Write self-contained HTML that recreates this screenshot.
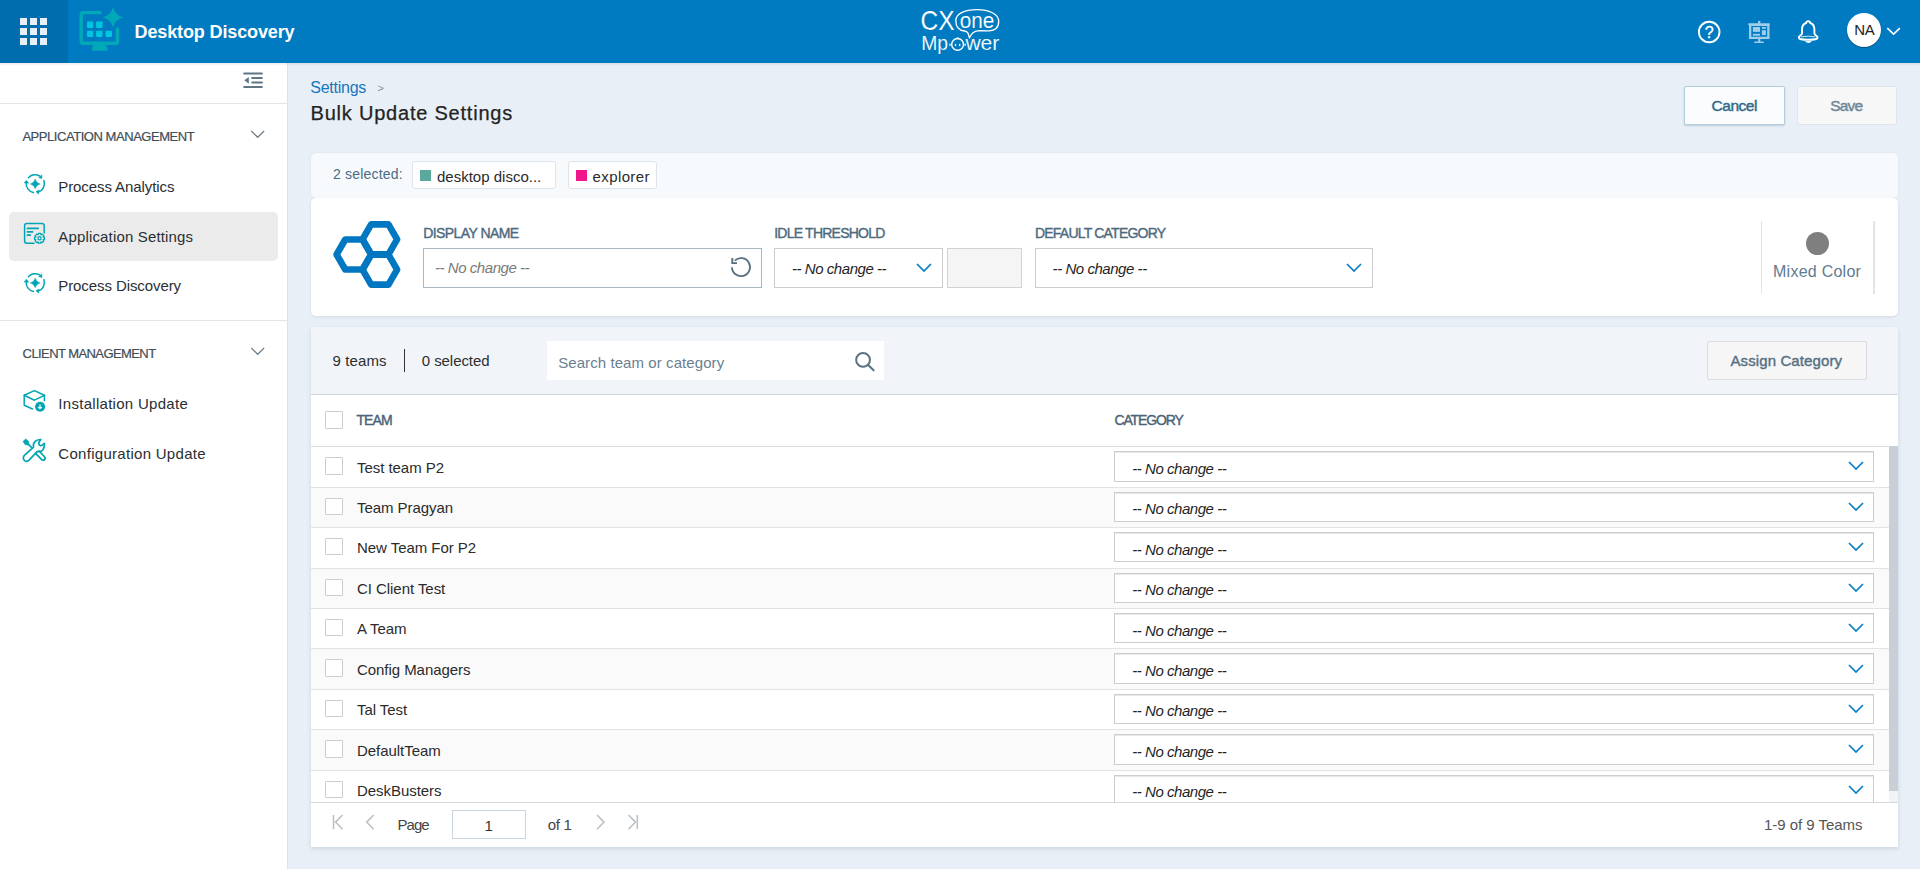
<!DOCTYPE html>
<html><head><meta charset="utf-8"><title>Bulk Update Settings</title>
<style>
html,body{margin:0;padding:0;width:1920px;height:869px;overflow:hidden;background:#e9eff6;font-family:"Liberation Sans", sans-serif;}
.t{position:absolute;line-height:1;white-space:nowrap;}
.r{position:absolute;box-sizing:border-box;}
svg{position:absolute;overflow:visible;}
</style></head><body>
<div class="r" style="left:0px;top:0px;width:1920px;height:63px;background:#007bc1;"></div>
<div class="r" style="left:0px;top:0px;width:68px;height:63px;background:#006dae;"></div>
<div class="r" style="left:20px;top:18px;width:7px;height:7px;background:#e8f0f7;"></div>
<div class="r" style="left:20px;top:28px;width:7px;height:7px;background:#e8f0f7;"></div>
<div class="r" style="left:20px;top:38px;width:7px;height:7px;background:#e8f0f7;"></div>
<div class="r" style="left:30px;top:18px;width:7px;height:7px;background:#e8f0f7;"></div>
<div class="r" style="left:30px;top:28px;width:7px;height:7px;background:#e8f0f7;"></div>
<div class="r" style="left:30px;top:38px;width:7px;height:7px;background:#e8f0f7;"></div>
<div class="r" style="left:40px;top:18px;width:7px;height:7px;background:#e8f0f7;"></div>
<div class="r" style="left:40px;top:28px;width:7px;height:7px;background:#e8f0f7;"></div>
<div class="r" style="left:40px;top:38px;width:7px;height:7px;background:#e8f0f7;"></div>
<svg style="left:70px;top:0" width="70" height="63" viewBox="0 0 70 63">
<path d="M30.2 12.6 H13.4 Q11.2 12.6 11.2 14.8 V41.1 Q11.2 43.3 13.4 43.3 H45.3 Q47.5 43.3 47.5 41.1 V29" fill="none" stroke="#00a8b8" stroke-width="3.4" stroke-linecap="round"/>
<path d="M23.4 44.6 H36 L37.6 49.3 Q37.9 50.7 36.5 50.7 H22.9 Q21.5 50.7 21.8 49.3 Z" fill="#00a8b8"/>
<path d="M43 6.9 Q45 15.2 53.3 17.2 Q45 19.2 43 27.5 Q41 19.2 32.7 17.2 Q41 15.2 43 6.9 Z" fill="#00a8b8"/>
<g fill="#00c6de">
<rect x="17" y="21.4" width="6.2" height="6.5" rx="1"/>
<rect x="26.1" y="21.4" width="6.4" height="6.5" rx="1"/>
<rect x="17" y="30.8" width="6.2" height="6.3" rx="1"/>
<rect x="26.1" y="30.8" width="6.4" height="6.3" rx="1"/>
<rect x="35.6" y="30.8" width="6.4" height="6.3" rx="1"/>
</g></svg>
<div class="t" style="left:134.60px;top:23.40px;font-size:18px;color:#ffffff;font-weight:bold;font-style:normal;letter-spacing:-0.13px;">Desktop Discovery</div>
<svg style="left:880px;top:0" width="160" height="63" viewBox="0 0 160 63">
<g fill="#fff" stroke="#007bc1" stroke-width="0.15" font-family="Liberation Sans">
<text x="40.6" y="30" font-size="27.4" textLength="34" lengthAdjust="spacingAndGlyphs">CX</text>
<text x="79.8" y="28" font-size="22.5" textLength="34.6" lengthAdjust="spacingAndGlyphs">one</text>
<text x="41.2" y="49.8" font-size="20.4" textLength="26.8" lengthAdjust="spacingAndGlyphs">Mp</text>
<text x="85.4" y="49.8" font-size="20" textLength="34" lengthAdjust="spacingAndGlyphs">wer</text>
</g>
<path d="M89.4 38 C88.6 34 88 31.4 84.5 31 C78.5 30.4 75.8 25.8 75.8 20.5 C75.8 13.2 85.5 9.7 97 9.7 C109 9.7 118.7 14 118.7 21.3 C118.7 27.8 114.5 30.8 108.5 30.8 L99.5 30.6 C94 30.6 91 33.8 89.4 38 Z" fill="none" stroke="#fff" stroke-width="1.3" stroke-linejoin="round"/>
<circle cx="77.6" cy="44.4" r="5.9" fill="none" stroke="#fff" stroke-width="1.4"/>
<circle cx="77.7" cy="38.3" r="1" fill="#fff"/>
<ellipse cx="75.5" cy="45" rx="0.75" ry="1.25" fill="#fff"/>
<ellipse cx="79.7" cy="45" rx="0.75" ry="1.25" fill="#fff"/>
<rect x="69.3" y="43.4" width="1.4" height="2.4" rx="0.6" fill="#fff"/>
<rect x="84.4" y="43.4" width="1.4" height="2.4" rx="0.6" fill="#fff"/>
</svg>
<svg style="left:1690px;top:10px" width="140" height="45" viewBox="0 0 140 45">
<circle cx="19.2" cy="22" r="10.3" fill="none" stroke="#fff" stroke-width="1.9"/>
<text x="19.2" y="27.8" text-anchor="middle" font-family="Liberation Sans" font-size="16" fill="#fff" stroke="#fff" stroke-width="0.3">?</text>
<g fill="#a0cde9" stroke="none">
<rect x="58.1" y="13.15" width="21.9" height="2.1" rx="0.9"/>
<rect x="68.1" y="10.9" width="2.2" height="3"/>
<path d="M59 15 H79.5 V28.9 H59 Z M61.3 15.9 V26.85 H77.2 V15.9 Z" fill-rule="evenodd"/>
<rect x="62.9" y="17" width="7.1" height="4.85"/>
<rect x="71.9" y="17" width="4" height="1.8"/>
<rect x="71.9" y="20.25" width="4" height="4.85"/>
<rect x="62.9" y="23.8" width="7.1" height="1.9"/>
<rect x="68.2" y="28.9" width="2.1" height="3"/>
<rect x="64" y="31.4" width="10" height="1.6" rx="0.8"/>
</g>
<path d="M118.2 11.2 C116.8 11.2 116.2 12.2 116.1 13 C113.3 13.8 112 16.5 112 19.8 V23.6 C112 24.6 111 25.2 110 25.8 C108.2 26.8 108.4 28.8 111 29.3 C113 29.7 115.5 29.8 118.2 29.8 C120.9 29.8 123.4 29.7 125.4 29.3 C128 28.8 128.2 26.8 126.4 25.8 C125.4 25.2 124.4 24.6 124.4 23.6 V19.8 C124.4 16.5 123.1 13.8 120.3 13 C120.2 12.2 119.6 11.2 118.2 11.2 Z" fill="none" stroke="#fff" stroke-width="1.9"/>
<path d="M111 26.9 Q118.2 25.4 125.4 26.9" fill="none" stroke="#fff" stroke-width="1" opacity="0.8"/>
<path d="M114.9 30.9 Q118.4 35 122 30.9 Z" fill="#fff"/>
</svg>
<div class="r" style="left:1847px;top:13px;width:34px;height:34px;border-radius:50%;background:#fff;box-shadow:0 1px 1px rgba(0,0,0,0.35);"></div>
<div class="t" style="left:1854.30px;top:22.25px;font-size:15px;color:#222;font-weight:normal;font-style:normal;letter-spacing:-0.4px;">NA</div>
<svg style="left:1880px;top:20px" width="30" height="20" viewBox="0 0 30 20">
<path d="M7.3 8.2 L13.6 14.2 L19.9 8.2" fill="none" stroke="#fff" stroke-width="1.6"/>
</svg>
<div class="r" style="left:0px;top:63px;width:287px;height:806px;background:#fff;"></div>
<div class="r" style="left:287px;top:63px;width:1px;height:806px;background:#e2e1e2;"></div>
<div class="r" style="left:0px;top:103px;width:287px;height:1px;background:#e1e5e8;"></div>
<div class="r" style="left:0px;top:320px;width:287px;height:1px;background:#e1e5e8;"></div>
<div class="r" style="left:0px;top:63px;width:1920px;height:3px;background:linear-gradient(rgba(60,40,40,0.09),rgba(60,40,40,0));"></div>
<svg style="left:236px;top:66px" width="34" height="30" viewBox="0 0 34 30">
<g stroke="#5e7686" stroke-width="2" stroke-linecap="round">
<line x1="8.2" y1="7.4" x2="25.9" y2="7.4"/>
<line x1="16.2" y1="12.1" x2="25.9" y2="12.1"/>
<line x1="16.2" y1="16.6" x2="25.9" y2="16.6"/>
<line x1="8.2" y1="20.9" x2="25.9" y2="20.9"/>
</g>
<path d="M8.3 14.3 L12.8 10.9 V17.7 Z" fill="#5e7686"/>
</svg>
<div class="t" style="left:22.40px;top:130.05px;font-size:13px;color:#414d55;font-weight:normal;font-style:normal;letter-spacing:-0.45px;-webkit-text-stroke:0.2px #414d55;">APPLICATION MANAGEMENT</div>
<svg style="left:248px;top:126px" width="20" height="16" viewBox="0 0 20 16">
<path d="M3.2 4.9 L9.7 11.3 L16.2 4.9" fill="none" stroke="#6a7b88" stroke-width="1.3"/>
</svg>
<div class="t" style="left:22.60px;top:347.45px;font-size:13px;color:#414d55;font-weight:normal;font-style:normal;letter-spacing:-0.58px;-webkit-text-stroke:0.2px #414d55;">CLIENT MANAGEMENT</div>
<svg style="left:248px;top:343px" width="20" height="16" viewBox="0 0 20 16">
<path d="M3.2 4.9 L9.7 11.3 L16.2 4.9" fill="none" stroke="#6a7b88" stroke-width="1.3"/>
</svg>
<div class="r" style="left:9px;top:212px;width:269px;height:49px;background:#ebebeb;border-radius:5px;"></div>
<div class="t" style="left:58.30px;top:179.35px;font-size:15px;color:#2a2f33;font-weight:normal;font-style:normal;letter-spacing:-0.09px;">Process Analytics</div>
<div class="t" style="left:58.30px;top:229.35px;font-size:15px;color:#2a2f33;font-weight:normal;font-style:normal;letter-spacing:0.16px;">Application Settings</div>
<div class="t" style="left:58.30px;top:278.15px;font-size:15px;color:#2a2f33;font-weight:normal;font-style:normal;letter-spacing:-0.09px;">Process Discovery</div>
<div class="t" style="left:58.30px;top:396.05px;font-size:15px;color:#2a2f33;font-weight:normal;font-style:normal;letter-spacing:0.29px;">Installation Update</div>
<div class="t" style="left:58.30px;top:445.95px;font-size:15px;color:#2a2f33;font-weight:normal;font-style:normal;letter-spacing:0.29px;">Configuration Update</div>
<svg style="left:20px;top:170px" width="30" height="30" viewBox="0 0 30 30">
<g fill="none" stroke="#00a5b5" stroke-width="1.5" stroke-linecap="round">
<path d="M8.4 7.7 A9 9 0 0 1 19.6 5.9"/>
<path d="M23.9 10.6 A9 9 0 0 1 18.2 22.1"/>
<path d="M13.4 22.5 A9 9 0 0 1 6.3 12.4"/>
</g>
<g fill="#00a5b5" stroke="#00a5b5" stroke-width="0.5" stroke-linejoin="round">
<path d="M21.8 5.0 L22.0 8.6 L18.6 7.6 Z"/>
<path d="M19.2 20.0 L15.9 21.6 L18.5 24.2 Z"/>
<path d="M6.5 10.2 L4.0 12.9 L8.6 13.2 Z"/>
<path d="M15.2 9.0 Q16.2 12.9 20.1 13.9 Q16.2 14.9 15.2 18.8 Q14.2 14.9 10.3 13.9 Q14.2 12.9 15.2 9.0 Z"/>
</g></svg>
<svg style="left:20px;top:269px" width="30" height="30" viewBox="0 0 30 30">
<g fill="none" stroke="#00a5b5" stroke-width="1.5" stroke-linecap="round">
<path d="M8.4 7.7 A9 9 0 0 1 19.6 5.9"/>
<path d="M23.9 10.6 A9 9 0 0 1 18.2 22.1"/>
<path d="M13.4 22.5 A9 9 0 0 1 6.3 12.4"/>
</g>
<g fill="#00a5b5" stroke="#00a5b5" stroke-width="0.5" stroke-linejoin="round">
<path d="M21.8 5.0 L22.0 8.6 L18.6 7.6 Z"/>
<path d="M19.2 20.0 L15.9 21.6 L18.5 24.2 Z"/>
<path d="M6.5 10.2 L4.0 12.9 L8.6 13.2 Z"/>
<path d="M15.2 9.0 Q16.2 12.9 20.1 13.9 Q16.2 14.9 15.2 18.8 Q14.2 14.9 10.3 13.9 Q14.2 12.9 15.2 9.0 Z"/>
</g></svg>
<svg style="left:20px;top:218px" width="30" height="30" viewBox="0 0 30 30">
<g fill="none" stroke="#00a5b5" stroke-width="1.5" stroke-linecap="round">
<path d="M14 25.2 H6.8 Q4.6 25.2 4.6 23 V7.7 Q4.6 5.5 6.8 5.5 H22 Q24.2 5.5 24.2 7.7 V15"/>
<line x1="7.4" y1="10.4" x2="18.2" y2="10.4" stroke-width="1.7"/>
<line x1="7.4" y1="13.8" x2="12.6" y2="13.8" stroke-width="1.7"/>
<line x1="7.4" y1="17.1" x2="10.4" y2="17.1" stroke-width="1.7"/>
<circle cx="19.5" cy="20.3" r="1.6" stroke-width="1.2"/>
<path d="M18.4 15.4 L20.6 15.4 L21 16.8 L22.3 16.1 L23.8 17.6 L23.1 18.9 L24.4 19.2 V21.4 L23.1 21.8 L23.8 23.1 L22.3 24.6 L21 23.9 L20.6 25.2 H18.4 L18 23.9 L16.7 24.6 L15.2 23.1 L15.9 21.8 L14.6 21.4 V19.2 L15.9 18.9 L15.2 17.6 L16.7 16.1 L18 16.8 Z" stroke-width="1.3" stroke-linejoin="round"/>
</g></svg>
<svg style="left:20px;top:386px" width="30" height="30" viewBox="0 0 30 30">
<g fill="none" stroke="#00a5b5" stroke-width="1.5" stroke-linejoin="round" stroke-linecap="round">
<path d="M14.4 4.6 L24.4 9.3 L14.4 14.2 L4.2 9.3 Z"/>
<path d="M4.2 9.3 V19.2 L12.5 23"/>
<path d="M24.4 9.3 V14.8"/>
</g>
<circle cx="20.1" cy="20.7" r="5.05" fill="#00a5b5"/>
<path d="M20 18.4 V22.3 M18.2 21 L20 22.7 L21.8 21" fill="none" stroke="#e6f6f8" stroke-width="1.3"/>
</svg>
<svg style="left:20px;top:436px" width="30" height="30" viewBox="0 0 30 30">
<g fill="none" stroke="#00a5b5" stroke-width="1.7" stroke-linecap="round" stroke-linejoin="round">
<path d="M20.8 3.5 C17 3.4 13.4 5.5 13.4 9.6 C13.4 10.3 13.5 10.8 13.6 11.2 L4.6 19.2 C2.8 20.8 3 23.4 4.6 24.6 C6 25.6 7.9 25.4 9.1 24.2 L17.3 15.4 C17.8 15.5 18.3 15.6 18.8 15.6 C22.5 15.6 24.8 12.5 24.4 7.3 L22.2 9.2 C21.2 10 19.8 9.8 19.2 8.8 C18.4 7.7 18.7 6.3 19.6 5.4 Z"/>
<path d="M8.2 8.2 L11.6 11.4"/>
<path d="M15.6 17.4 L21.4 23.4 C22.3 24.4 23.7 24.5 24.5 23.6 C25.3 22.7 25.2 21.4 24.3 20.5 L19.2 15.2"/>
</g>
<path d="M3 5.6 L5.7 2.9 L8.6 5.2 L9 8.4 L8.3 9.1 L5.3 8.7 Z" fill="#00a5b5" stroke="#00a5b5" stroke-width="0.6" stroke-linejoin="round"/>
</svg>
<div class="t" style="left:310.30px;top:80.20px;font-size:16px;color:#1577bd;font-weight:normal;font-style:normal;letter-spacing:-0.25px;">Settings</div>
<div class="t" style="left:377.50px;top:82.65px;font-size:11px;color:#8a8f93;font-weight:normal;font-style:normal;letter-spacing:0px;">&gt;</div>
<div class="t" style="left:310.60px;top:102.60px;font-size:20px;color:#232323;font-weight:normal;font-style:normal;letter-spacing:0.78px;-webkit-text-stroke:0.25px #232323;">Bulk Update Settings</div>
<div class="r" style="left:1684px;top:86px;width:100.5px;height:38.5px;background:#fafcfe;border:1px solid #b5cddb;border-radius:2px;box-shadow:0 1px 2px rgba(60,100,130,0.25);"></div>
<div class="t" style="left:1711.60px;top:97.92px;font-size:15.5px;color:#316a88;font-weight:normal;font-style:normal;letter-spacing:-0.5px;-webkit-text-stroke:0.45px #316a88;">Cancel</div>
<div class="r" style="left:1796.5px;top:86px;width:100.5px;height:38.5px;background:#f7f7f7;border:1px solid #dfe4e8;border-radius:2px;"></div>
<div class="t" style="left:1830.20px;top:97.92px;font-size:15.5px;color:#6d889a;font-weight:normal;font-style:normal;letter-spacing:-0.8px;-webkit-text-stroke:0.45px #6d889a;">Save</div>
<div class="r" style="left:311px;top:153px;width:1587px;height:44.5px;background:#f7fafc;border-radius:5px;box-shadow:0 0 2px rgba(80,110,140,0.12);"></div>
<div class="t" style="left:333.00px;top:166.90px;font-size:14px;color:#4a6b82;font-weight:normal;font-style:normal;letter-spacing:0.2px;">2 selected:</div>
<div class="r" style="left:412.4px;top:161px;width:144px;height:28.3px;background:#fff;border:1px solid #dfe3ea;border-radius:3px;"></div>
<div class="r" style="left:420px;top:170.2px;width:11px;height:10.6px;background:#5ba99c;"></div>
<div class="t" style="left:437.00px;top:168.65px;font-size:15px;color:#2b2b2b;font-weight:normal;font-style:normal;letter-spacing:0.0px;">desktop disco...</div>
<div class="r" style="left:568.4px;top:161px;width:89px;height:28.3px;background:#fff;border:1px solid #dfe3ea;border-radius:3px;"></div>
<div class="r" style="left:576px;top:170.2px;width:11px;height:10.6px;background:#f0168c;"></div>
<div class="t" style="left:592.60px;top:168.65px;font-size:15px;color:#2b2b2b;font-weight:normal;font-style:normal;letter-spacing:0.38px;">explorer</div>
<div class="r" style="left:311px;top:198px;width:1587px;height:118px;background:#fff;border-radius:5px;box-shadow:0 1px 3px rgba(80,110,140,0.15);"></div>
<svg style="left:0;top:0" width="1" height="1" viewBox="0 0 1 1">
<g fill="none" stroke="#0077c0" stroke-width="6.6" stroke-linejoin="round">
<path d="M397.10 239.40 L388.45 254.38 L371.15 254.38 L362.50 239.40 L371.15 224.42 L388.45 224.42 Z"/>
<path d="M397.10 269.60 L388.45 284.58 L371.15 284.58 L362.50 269.60 L371.15 254.62 L388.45 254.62 Z"/>
<path d="M371.20 254.50 L362.55 269.48 L345.25 269.48 L336.60 254.50 L345.25 239.52 L362.55 239.52 Z"/>
</g></svg>
<div class="t" style="left:423.20px;top:226.30px;font-size:14px;color:#4e6a7e;font-weight:normal;font-style:normal;letter-spacing:-0.56px;-webkit-text-stroke:0.4px #4e6a7e;">DISPLAY NAME</div>
<div class="t" style="left:774.20px;top:226.30px;font-size:14px;color:#4e6a7e;font-weight:normal;font-style:normal;letter-spacing:-0.77px;-webkit-text-stroke:0.4px #4e6a7e;">IDLE THRESHOLD</div>
<div class="t" style="left:1035.00px;top:226.30px;font-size:14px;color:#4e6a7e;font-weight:normal;font-style:normal;letter-spacing:-0.79px;-webkit-text-stroke:0.4px #4e6a7e;">DEFAULT CATEGORY</div>
<div class="r" style="left:423px;top:248px;width:338.5px;height:40px;background:#fff;border:1px solid #a8b8c3;"></div>
<div class="t" style="left:435.00px;top:260.35px;font-size:15px;color:#7a7a7a;font-weight:normal;font-style:italic;letter-spacing:-0.45px;">-- No change --</div>
<svg style="left:725px;top:252px" width="32" height="30" viewBox="0 0 32 30">
<path d="M7 15.2 A9 9 0 1 0 9.8 8.6" fill="none" stroke="#566e7e" stroke-width="1.8"/>
<path d="M7.3 6 V11.1 H12" fill="none" stroke="#566e7e" stroke-width="1.9"/>
</svg>
<div class="r" style="left:774px;top:248px;width:168.8px;height:40px;background:#fff;border:1px solid #cdcdcd;"></div>
<div class="t" style="left:792.00px;top:261.25px;font-size:15px;color:#1f1f1f;font-weight:normal;font-style:italic;letter-spacing:-0.45px;">-- No change --</div>
<svg style="left:916.4px;top:263.2px" width="16" height="10" viewBox="0 0 16 10">
<path d="M1 1 L8 8 L15 1" fill="none" stroke="#0a7fc5" stroke-width="1.7"/>
</svg>
<div class="r" style="left:947.3px;top:248px;width:75px;height:40px;background:#f5f5f5;border:1px solid #d3d3d3;"></div>
<div class="r" style="left:1035px;top:248px;width:338px;height:40px;background:#fff;border:1px solid #cdcdcd;"></div>
<div class="t" style="left:1052.60px;top:261.25px;font-size:15px;color:#1f1f1f;font-weight:normal;font-style:italic;letter-spacing:-0.45px;">-- No change --</div>
<svg style="left:1346px;top:263.2px" width="16" height="10" viewBox="0 0 16 10">
<path d="M1 1 L8 8 L15 1" fill="none" stroke="#0a7fc5" stroke-width="1.7"/>
</svg>
<div class="r" style="left:1760.5px;top:221px;width:1.5px;height:73px;background:#e1e5e9;"></div>
<div class="r" style="left:1873px;top:221px;width:1.5px;height:73px;background:#e1e5e9;"></div>
<div class="r" style="left:1805.6px;top:231.5px;width:23.5px;height:23.5px;border-radius:50%;background:#7f7f7f;"></div>
<div class="t" style="left:1773.00px;top:263.60px;font-size:16px;color:#5e7c8f;font-weight:normal;font-style:normal;letter-spacing:0.25px;">Mixed Color</div>
<div class="r" style="left:311px;top:327px;width:1587px;height:520px;background:#fff;box-shadow:0 2px 4px rgba(80,110,140,0.18);"></div>
<div class="r" style="left:311px;top:327px;width:1587px;height:67px;background:#f1f5f9;"></div>
<div class="r" style="left:311px;top:394px;width:1587px;height:1px;background:#d2d8de;"></div>
<div class="t" style="left:332.60px;top:352.95px;font-size:15px;color:#2e2e2e;font-weight:normal;font-style:normal;letter-spacing:0.1px;">9 teams</div>
<div class="r" style="left:404px;top:349.2px;width:1.3px;height:22.4px;background:#333;"></div>
<div class="t" style="left:421.80px;top:352.95px;font-size:15px;color:#2e2e2e;font-weight:normal;font-style:normal;letter-spacing:-0.07px;">0 selected</div>
<div class="r" style="left:547px;top:341px;width:337px;height:38.6px;background:#fff;"></div>
<div class="t" style="left:558.20px;top:354.55px;font-size:15px;color:#6b808f;font-weight:normal;font-style:normal;letter-spacing:0.08px;">Search team or category</div>
<svg style="left:850px;top:348px" width="30" height="28" viewBox="0 0 30 28">
<circle cx="13.05" cy="11.9" r="6.9" fill="none" stroke="#5b7382" stroke-width="2"/>
<line x1="18.2" y1="17" x2="23.6" y2="22.3" stroke="#5b7382" stroke-width="2.1" stroke-linecap="round"/>
</svg>
<div class="r" style="left:1707px;top:341px;width:159.6px;height:38.5px;background:#f6f6f6;border:1px solid #dcdcdc;border-radius:2px;"></div>
<div class="t" style="left:1730.40px;top:353.45px;font-size:15px;color:#557084;font-weight:normal;font-style:normal;letter-spacing:0.12px;-webkit-text-stroke:0.4px #557084;">Assign Category</div>
<div class="r" style="left:325.2px;top:411.2px;width:17.6px;height:17.4px;background:#fff;border:1px solid #cdcdcd;border-radius:1px;"></div>
<div class="t" style="left:356.50px;top:413.40px;font-size:14px;color:#4a6376;font-weight:normal;font-style:normal;letter-spacing:-0.95px;-webkit-text-stroke:0.4px #4a6376;">TEAM</div>
<div class="t" style="left:1114.50px;top:413.40px;font-size:14px;color:#4a6376;font-weight:normal;font-style:normal;letter-spacing:-1.15px;-webkit-text-stroke:0.4px #4a6376;">CATEGORY</div>
<div class="r" style="left:311px;top:446px;width:1578px;height:1px;background:#d9dee2;"></div>
<div class="r" style="left:311px;top:446.5px;width:1578px;height:356px;overflow:hidden;">
<div class="r" style="left:0;top:-0.30px;width:1578px;height:40.44px;background:#ffffff;border-top:1px solid #dfe4e8;"></div>
<div class="r" style="left:14.2px;top:10.699999999999989px;width:17.6px;height:17.4px;background:#fff;border:1px solid #cdcdcd;border-radius:1px;"></div>
<div class="t" style="left:46.00px;top:13.05px;font-size:15px;color:#2b2b2b;font-weight:normal;font-style:normal;letter-spacing:-0.05px;">Test team P2</div>
<div class="r" style="left:803.3px;top:4.70px;width:760px;height:30.4px;background:#fff;border:1px solid #cdcdcd;box-shadow:inset 0 1px 0 rgba(0,0,0,0.09);"></div>
<div class="t" style="left:821.20px;top:14.35px;font-size:15px;color:#1f1f1f;font-weight:normal;font-style:italic;letter-spacing:-0.45px;">-- No change --</div>
<svg style="left:1536.5px;top:14.899999999999988px" width="16" height="10" viewBox="0 0 16 10">
<path d="M1 1 L8 8 L15 1" fill="none" stroke="#0a7fc5" stroke-width="1.7"/>
</svg>
<div class="r" style="left:0;top:40.14px;width:1578px;height:40.44px;background:#fafafa;border-top:1px solid #dfe4e8;"></div>
<div class="r" style="left:14.2px;top:51.139999999999986px;width:17.6px;height:17.4px;background:#fff;border:1px solid #cdcdcd;border-radius:1px;"></div>
<div class="t" style="left:46.00px;top:53.49px;font-size:15px;color:#2b2b2b;font-weight:normal;font-style:normal;letter-spacing:-0.05px;">Team Pragyan</div>
<div class="r" style="left:803.3px;top:45.14px;width:760px;height:30.4px;background:#fff;border:1px solid #cdcdcd;box-shadow:inset 0 1px 0 rgba(0,0,0,0.09);"></div>
<div class="t" style="left:821.20px;top:54.79px;font-size:15px;color:#1f1f1f;font-weight:normal;font-style:italic;letter-spacing:-0.45px;">-- No change --</div>
<svg style="left:1536.5px;top:55.33999999999999px" width="16" height="10" viewBox="0 0 16 10">
<path d="M1 1 L8 8 L15 1" fill="none" stroke="#0a7fc5" stroke-width="1.7"/>
</svg>
<div class="r" style="left:0;top:80.58px;width:1578px;height:40.44px;background:#ffffff;border-top:1px solid #dfe4e8;"></div>
<div class="r" style="left:14.2px;top:91.57999999999993px;width:17.6px;height:17.4px;background:#fff;border:1px solid #cdcdcd;border-radius:1px;"></div>
<div class="t" style="left:46.00px;top:93.93px;font-size:15px;color:#2b2b2b;font-weight:normal;font-style:normal;letter-spacing:-0.05px;">New Team For P2</div>
<div class="r" style="left:803.3px;top:85.58px;width:760px;height:30.4px;background:#fff;border:1px solid #cdcdcd;box-shadow:inset 0 1px 0 rgba(0,0,0,0.09);"></div>
<div class="t" style="left:821.20px;top:95.23px;font-size:15px;color:#1f1f1f;font-weight:normal;font-style:italic;letter-spacing:-0.45px;">-- No change --</div>
<svg style="left:1536.5px;top:95.77999999999993px" width="16" height="10" viewBox="0 0 16 10">
<path d="M1 1 L8 8 L15 1" fill="none" stroke="#0a7fc5" stroke-width="1.7"/>
</svg>
<div class="r" style="left:0;top:121.02px;width:1578px;height:40.44px;background:#fafafa;border-top:1px solid #dfe4e8;"></div>
<div class="r" style="left:14.2px;top:132.01999999999998px;width:17.6px;height:17.4px;background:#fff;border:1px solid #cdcdcd;border-radius:1px;"></div>
<div class="t" style="left:46.00px;top:134.37px;font-size:15px;color:#2b2b2b;font-weight:normal;font-style:normal;letter-spacing:-0.05px;">CI Client Test</div>
<div class="r" style="left:803.3px;top:126.02px;width:760px;height:30.4px;background:#fff;border:1px solid #cdcdcd;box-shadow:inset 0 1px 0 rgba(0,0,0,0.09);"></div>
<div class="t" style="left:821.20px;top:135.67px;font-size:15px;color:#1f1f1f;font-weight:normal;font-style:italic;letter-spacing:-0.45px;">-- No change --</div>
<svg style="left:1536.5px;top:136.21999999999997px" width="16" height="10" viewBox="0 0 16 10">
<path d="M1 1 L8 8 L15 1" fill="none" stroke="#0a7fc5" stroke-width="1.7"/>
</svg>
<div class="r" style="left:0;top:161.46px;width:1578px;height:40.44px;background:#ffffff;border-top:1px solid #dfe4e8;"></div>
<div class="r" style="left:14.2px;top:172.46000000000004px;width:17.6px;height:17.4px;background:#fff;border:1px solid #cdcdcd;border-radius:1px;"></div>
<div class="t" style="left:46.00px;top:174.81px;font-size:15px;color:#2b2b2b;font-weight:normal;font-style:normal;letter-spacing:-0.05px;">A Team</div>
<div class="r" style="left:803.3px;top:166.46px;width:760px;height:30.4px;background:#fff;border:1px solid #cdcdcd;box-shadow:inset 0 1px 0 rgba(0,0,0,0.09);"></div>
<div class="t" style="left:821.20px;top:176.11px;font-size:15px;color:#1f1f1f;font-weight:normal;font-style:italic;letter-spacing:-0.45px;">-- No change --</div>
<svg style="left:1536.5px;top:176.66000000000003px" width="16" height="10" viewBox="0 0 16 10">
<path d="M1 1 L8 8 L15 1" fill="none" stroke="#0a7fc5" stroke-width="1.7"/>
</svg>
<div class="r" style="left:0;top:201.90px;width:1578px;height:40.44px;background:#fafafa;border-top:1px solid #dfe4e8;"></div>
<div class="r" style="left:14.2px;top:212.89999999999998px;width:17.6px;height:17.4px;background:#fff;border:1px solid #cdcdcd;border-radius:1px;"></div>
<div class="t" style="left:46.00px;top:215.25px;font-size:15px;color:#2b2b2b;font-weight:normal;font-style:normal;letter-spacing:-0.05px;">Config Managers</div>
<div class="r" style="left:803.3px;top:206.90px;width:760px;height:30.4px;background:#fff;border:1px solid #cdcdcd;box-shadow:inset 0 1px 0 rgba(0,0,0,0.09);"></div>
<div class="t" style="left:821.20px;top:216.55px;font-size:15px;color:#1f1f1f;font-weight:normal;font-style:italic;letter-spacing:-0.45px;">-- No change --</div>
<svg style="left:1536.5px;top:217.09999999999997px" width="16" height="10" viewBox="0 0 16 10">
<path d="M1 1 L8 8 L15 1" fill="none" stroke="#0a7fc5" stroke-width="1.7"/>
</svg>
<div class="r" style="left:0;top:242.34px;width:1578px;height:40.44px;background:#ffffff;border-top:1px solid #dfe4e8;"></div>
<div class="r" style="left:14.2px;top:253.33999999999992px;width:17.6px;height:17.4px;background:#fff;border:1px solid #cdcdcd;border-radius:1px;"></div>
<div class="t" style="left:46.00px;top:255.69px;font-size:15px;color:#2b2b2b;font-weight:normal;font-style:normal;letter-spacing:-0.05px;">Tal Test</div>
<div class="r" style="left:803.3px;top:247.34px;width:760px;height:30.4px;background:#fff;border:1px solid #cdcdcd;box-shadow:inset 0 1px 0 rgba(0,0,0,0.09);"></div>
<div class="t" style="left:821.20px;top:256.99px;font-size:15px;color:#1f1f1f;font-weight:normal;font-style:italic;letter-spacing:-0.45px;">-- No change --</div>
<svg style="left:1536.5px;top:257.5399999999999px" width="16" height="10" viewBox="0 0 16 10">
<path d="M1 1 L8 8 L15 1" fill="none" stroke="#0a7fc5" stroke-width="1.7"/>
</svg>
<div class="r" style="left:0;top:282.78px;width:1578px;height:40.44px;background:#fafafa;border-top:1px solid #dfe4e8;"></div>
<div class="r" style="left:14.2px;top:293.78px;width:17.6px;height:17.4px;background:#fff;border:1px solid #cdcdcd;border-radius:1px;"></div>
<div class="t" style="left:46.00px;top:296.13px;font-size:15px;color:#2b2b2b;font-weight:normal;font-style:normal;letter-spacing:-0.05px;">DefaultTeam</div>
<div class="r" style="left:803.3px;top:287.78px;width:760px;height:30.4px;background:#fff;border:1px solid #cdcdcd;box-shadow:inset 0 1px 0 rgba(0,0,0,0.09);"></div>
<div class="t" style="left:821.20px;top:297.43px;font-size:15px;color:#1f1f1f;font-weight:normal;font-style:italic;letter-spacing:-0.45px;">-- No change --</div>
<svg style="left:1536.5px;top:297.97999999999996px" width="16" height="10" viewBox="0 0 16 10">
<path d="M1 1 L8 8 L15 1" fill="none" stroke="#0a7fc5" stroke-width="1.7"/>
</svg>
<div class="r" style="left:0;top:323.22px;width:1578px;height:40.44px;background:#ffffff;border-top:1px solid #dfe4e8;"></div>
<div class="r" style="left:14.2px;top:334.22px;width:17.6px;height:17.4px;background:#fff;border:1px solid #cdcdcd;border-radius:1px;"></div>
<div class="t" style="left:46.00px;top:336.57px;font-size:15px;color:#2b2b2b;font-weight:normal;font-style:normal;letter-spacing:-0.05px;">DeskBusters</div>
<div class="r" style="left:803.3px;top:328.22px;width:760px;height:30.4px;background:#fff;border:1px solid #cdcdcd;box-shadow:inset 0 1px 0 rgba(0,0,0,0.09);"></div>
<div class="t" style="left:821.20px;top:337.87px;font-size:15px;color:#1f1f1f;font-weight:normal;font-style:italic;letter-spacing:-0.45px;">-- No change --</div>
<svg style="left:1536.5px;top:338.42px" width="16" height="10" viewBox="0 0 16 10">
<path d="M1 1 L8 8 L15 1" fill="none" stroke="#0a7fc5" stroke-width="1.7"/>
</svg>
</div>
<div class="r" style="left:1889px;top:446.2px;width:9px;height:356.4px;background:#f1f4f7;"></div>
<div class="r" style="left:1889px;top:446.2px;width:9px;height:345.3px;background:#c8cfd6;"></div>
<div class="r" style="left:311px;top:802.2px;width:1587px;height:1px;background:#d3d9de;"></div>
<svg style="left:320px;top:805px" width="330" height="35" viewBox="0 0 330 35">
<g fill="none" stroke="#b9bfc4" stroke-width="1.5">
<line x1="13.5" y1="10" x2="13.5" y2="24.2"/>
<path d="M22.5 10 L15.5 17.1 L22.5 24.2"/>
<path d="M53.7 10 L46.7 17.1 L53.7 24.2"/>
<path d="M277 10 L284 17.1 L277 24.2"/>
<path d="M308.5 10 L315.5 17.1 L308.5 24.2"/>
<line x1="317.3" y1="10" x2="317.3" y2="24.2"/>
</g></svg>
<div class="t" style="left:397.50px;top:817.25px;font-size:15px;color:#454545;font-weight:normal;font-style:normal;letter-spacing:-0.95px;">Page</div>
<div class="r" style="left:452.3px;top:810.3px;width:74px;height:28.3px;background:#fff;border:1px solid #c8d4de;"></div>
<div class="t" style="left:484.50px;top:817.75px;font-size:15px;color:#333;font-weight:normal;font-style:normal;letter-spacing:0px;">1</div>
<div class="t" style="left:547.80px;top:817.45px;font-size:15px;color:#454545;font-weight:normal;font-style:normal;letter-spacing:-0.3px;">of 1</div>
<div class="t" style="left:1764.00px;top:817.35px;font-size:15px;color:#555;font-weight:normal;font-style:normal;letter-spacing:-0.03px;">1-9 of 9 Teams</div>
</body></html>
